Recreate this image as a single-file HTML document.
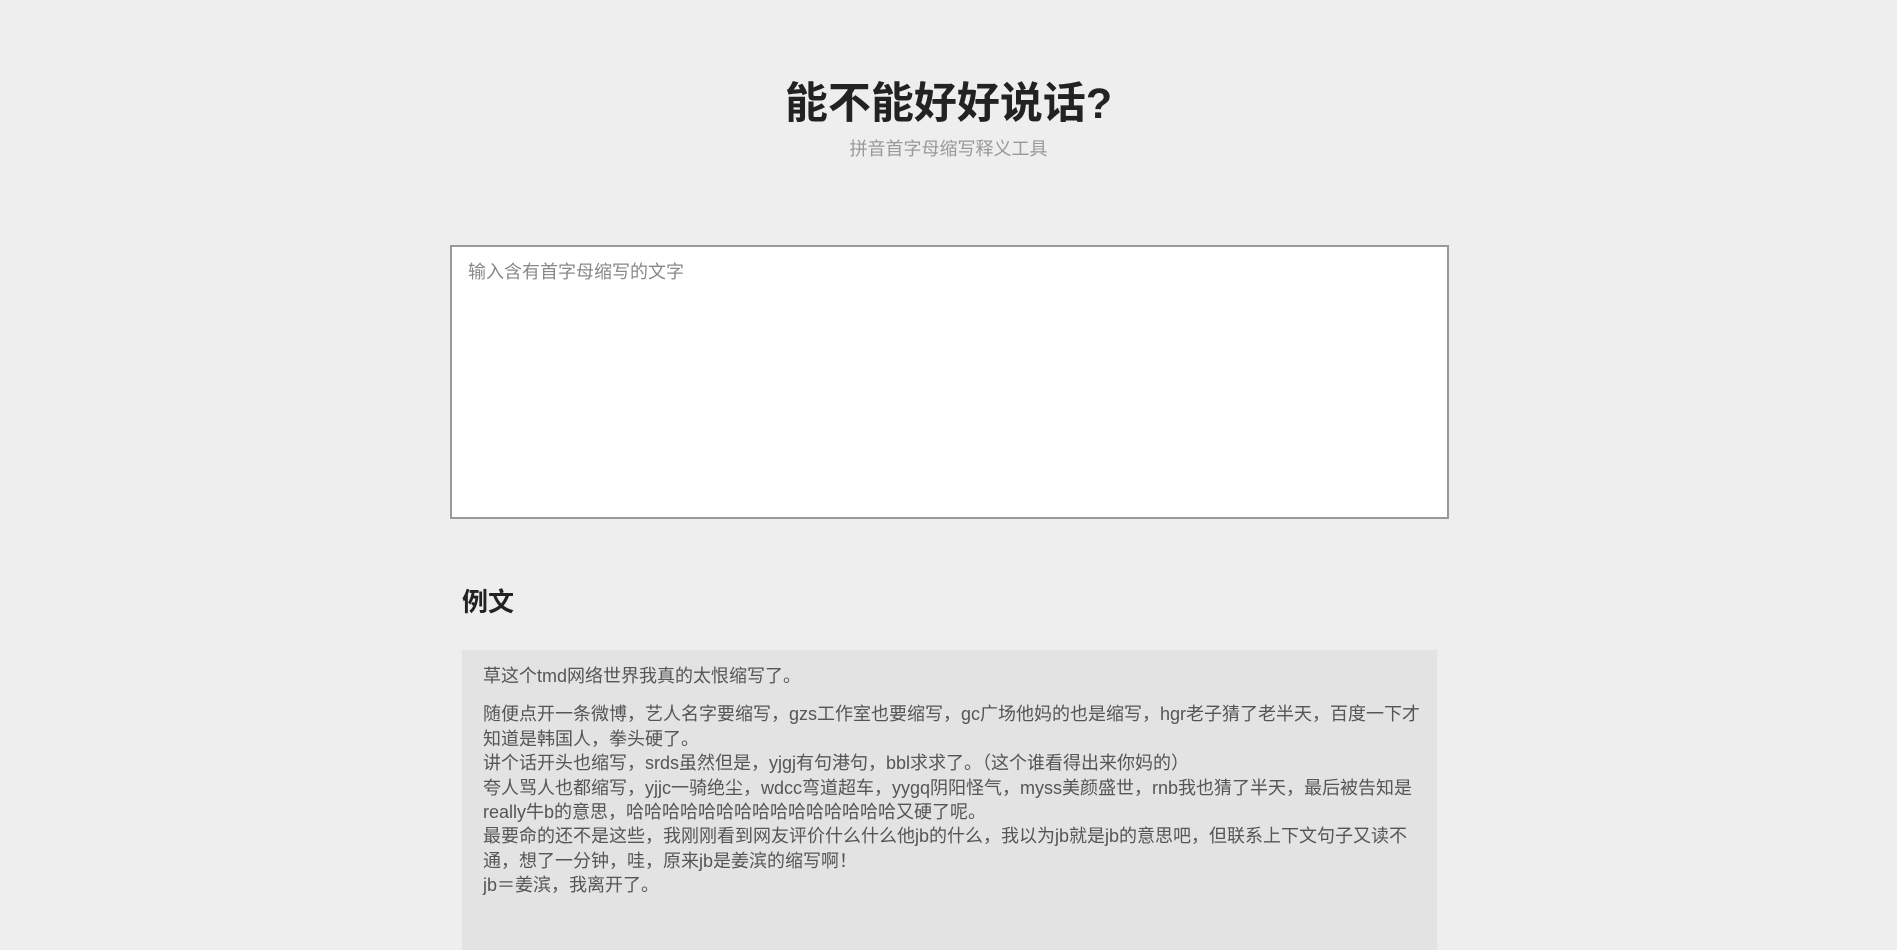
<!DOCTYPE html>
<html><head><meta charset="utf-8"><style>
html,body{margin:0;padding:0;background:#eeeeee;}
body{width:1897px;height:897px;overflow:hidden;font-family:"Liberation Sans","Noto Sans CJK SC",sans-serif;}
h1{position:absolute;left:0;width:1897px;top:74px;margin:0;text-align:center;font-size:43px;line-height:60px;font-weight:bold;color:#222;}
.sub{position:absolute;left:0;width:1897px;top:136px;text-align:center;font-size:18px;line-height:26px;color:#999;}
.ta{position:absolute;left:450px;top:245px;width:995px;height:270px;border:2px solid #999;background:#fff;}
.ta span{position:absolute;left:16px;top:12px;font-size:18px;line-height:26px;color:#888;}
h2{position:absolute;left:462px;top:584px;margin:0;font-size:26px;line-height:36px;font-weight:bold;color:#222;}
.box{position:absolute;left:462px;top:650px;width:975px;height:300px;background:#e3e3e3;box-sizing:border-box;padding:14px 10px 14px 21px;color:#555;font-size:18px;line-height:24.4px;}
.box p{margin:0 0 14px 0;}
</style></head><body>
<h1>能不能好好说话?</h1>
<div class="sub">拼音首字母缩写释义工具</div>
<div class="ta"><span>输入含有首字母缩写的文字</span></div>
<h2>例文</h2>
<div class="box">
<p>草这个tmd网络世界我真的太恨缩写了。</p>
<p>随便点开一条微博，艺人名字要缩写，gzs工作室也要缩写，gc广场他妈的也是缩写，hgr老子猜了老半天，百度一下才知道是韩国人，拳头硬了。<br>讲个话开头也缩写，srds虽然但是，yjgj有句港句，bbl求求了。（这个谁看得出来你妈的）<br>夸人骂人也都缩写，yjjc一骑绝尘，wdcc弯道超车，yygq阴阳怪气，myss美颜盛世，rnb我也猜了半天，最后被告知是really牛b的意思，哈哈哈哈哈哈哈哈哈哈哈哈哈哈哈又硬了呢。<br>最要命的还不是这些，我刚刚看到网友评价什么什么他jb的什么，我以为jb就是jb的意思吧，但联系上下文句子又读不通，想了一分钟，哇，原来jb是姜滨的缩写啊！<br>jb＝姜滨，我离开了。</p>
</div>
</body></html>
